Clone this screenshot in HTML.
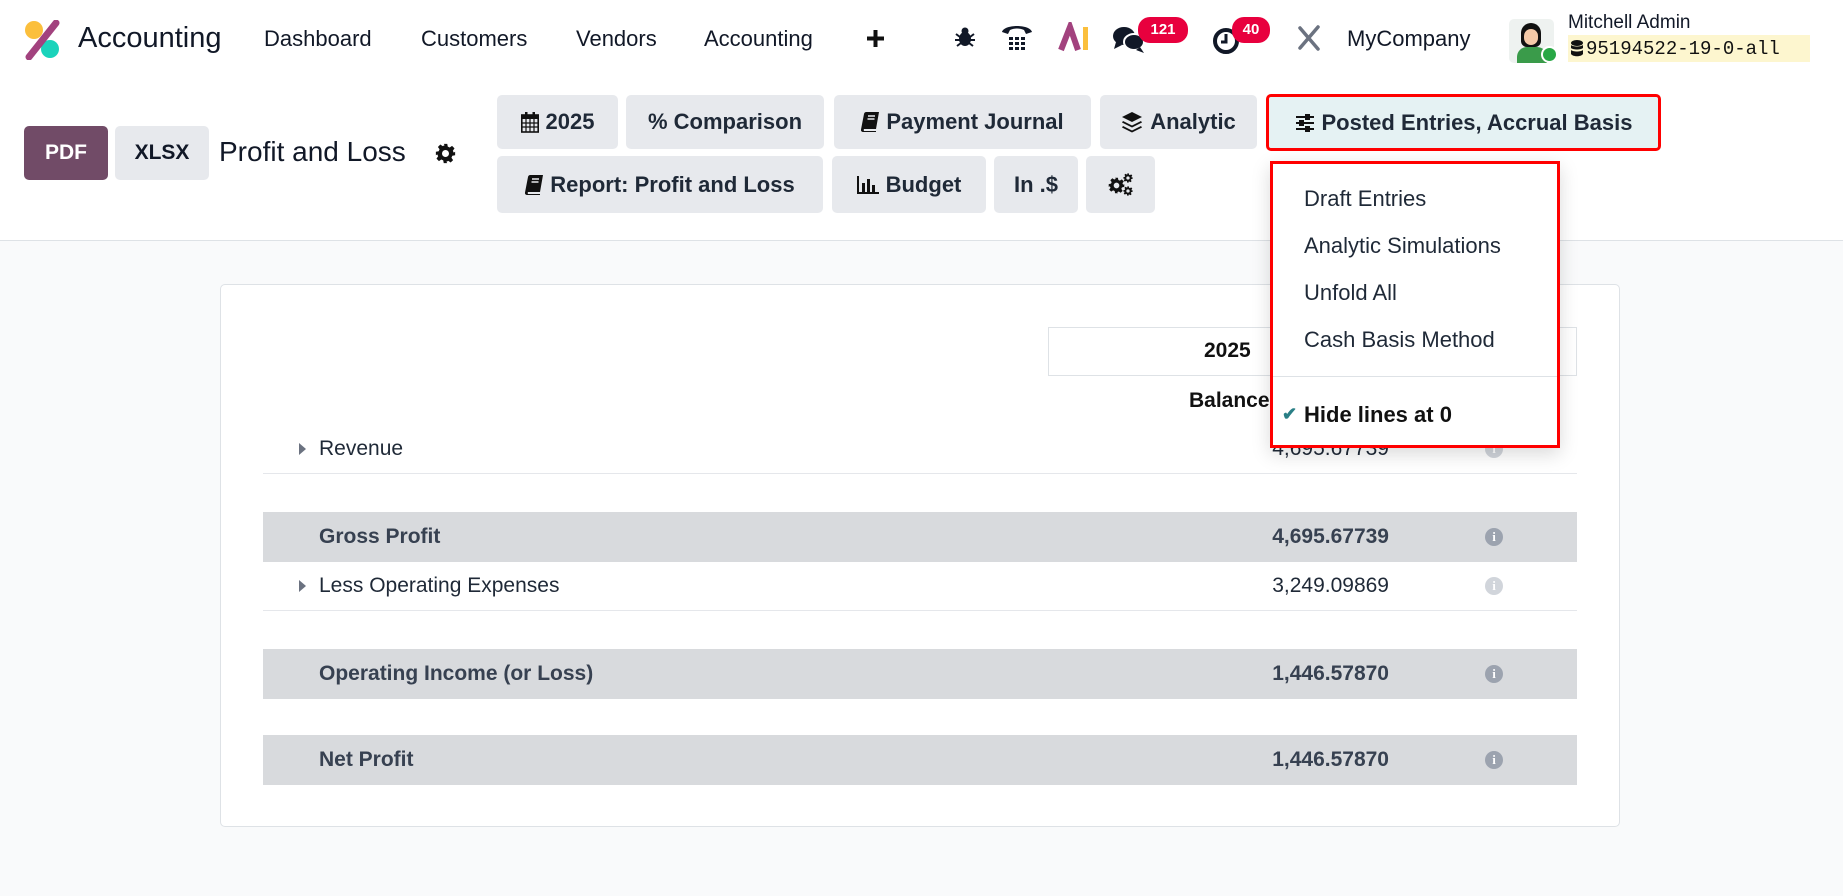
<!DOCTYPE html>
<html><head><meta charset="utf-8"><style>
*{box-sizing:border-box;margin:0;padding:0}
body{width:1843px;height:896px;position:relative;overflow:hidden;background:#f9fafb;font-family:"Liberation Sans",sans-serif;color:#1f2937}
.a{position:absolute;white-space:nowrap}
.top{position:absolute;left:0;top:0;width:1843px;height:241px;background:#fff;border-bottom:1px solid #dee2e6}
.nav{font-size:22px;color:#111827;top:26px}
.btn{position:absolute;background:#e7e9ed;border-radius:5px;font-weight:bold;font-size:22px;color:#1f2937;display:flex;align-items:center;justify-content:center;gap:7px}
.badge{position:absolute;background:#e8003e;color:#fff;font-weight:bold;font-size:15px;border-radius:12px;height:26px;line-height:26px;text-align:center}
.card{position:absolute;left:220px;top:284px;width:1400px;height:543px;background:#fff;border:1px solid #dee2e6;border-radius:5px}
.row{position:absolute;left:263px;width:1314px;height:50px;font-size:21px}
.row .l{position:absolute;left:56px;top:13px}
.row .v{position:absolute;right:188px;top:13px}
.band{background:#d8dadd;font-weight:bold;color:#374151}
.info{position:absolute;left:1222px;top:16px;width:18px;height:18px;border-radius:50%;background:#9ca3af;color:#fff;font-size:13px;font-weight:bold;text-align:center;line-height:18px;font-family:"Liberation Serif",serif}
.tri{position:absolute;left:36px;top:19px;width:0;height:0;border-left:7px solid #6b7280;border-top:6px solid transparent;border-bottom:6px solid transparent}
.dd{position:absolute;left:1270px;top:161px;width:290px;height:287px;background:#fff;border:3px solid #f00;box-shadow:0 6px 18px rgba(0,0,0,.15)}
.dd div{position:absolute;left:31px;font-size:22px;color:#1f2937}
</style></head><body>
<div class="top"></div>
<svg width="0" height="0" style="position:absolute"><defs>
<symbol id="gear" viewBox="0 0 24 24"><path fill="#111" d="M10 1h4l.6 3.2 2.2 1 2.7-1.9 2.8 2.8-1.9 2.7 1 2.2L23 10v4l-3.2.6-1 2.2 1.9 2.7-2.8 2.8-2.7-1.9-2.2 1L14 23h-4l-.6-3.2-2.2-1-2.7 1.9-2.8-2.8 1.9-2.7-1-2.2L1 14v-4l3.2-.6 1-2.2-1.9-2.7 2.8-2.8 2.7 1.9 2.2-1zM12 8a4 4 0 100 8 4 4 0 000-8z" fill-rule="evenodd"/></symbol>
<symbol id="book" viewBox="0 0 18 20"><path fill="#111" d="M5 0h13l-3 17H3a2 2 0 000 2h12v1H2a2 2 0 01-2-2.5L3 2a2.5 2.5 0 012-2z"/><path d="M7 4h7M6.5 7h7" stroke="#e7e9ed" stroke-width="1.4"/></symbol>
</defs></svg>
<!-- logo -->
<svg class="a" style="left:24px;top:20px" width="38" height="40" viewBox="0 0 38 40">
<circle cx="10" cy="10" r="9" fill="#fbbf3c"/><circle cx="26" cy="29" r="9" fill="#1ad3bb"/>
<line x1="32" y1="3" x2="5" y2="37" stroke="#a2427e" stroke-width="7" stroke-linecap="round"/></svg>
<div class="a" style="left:78px;top:22px;font-size:29px;color:#111827">Accounting</div>
<div class="a nav" style="left:264px">Dashboard</div>
<div class="a nav" style="left:421px">Customers</div>
<div class="a nav" style="left:576px">Vendors</div>
<div class="a nav" style="left:704px">Accounting</div>
<svg class="a" style="left:866px;top:29px" width="19" height="19" viewBox="0 0 19 19"><path d="M9.5 1v17M1 9.5h17" stroke="#111" stroke-width="4"/></svg>
<!-- icons -->
<svg class="a" style="left:954px;top:26px" width="22" height="22" viewBox="0 0 22 22" fill="#111827"><ellipse cx="11" cy="13" rx="6" ry="7"/><circle cx="11" cy="5" r="3.5"/><path d="M2 8l4 3M20 8l-4 3M1 14h5M21 14h-5M3 20l4-3M19 20l-4-3" stroke="#111827" stroke-width="2"/></svg>
<svg class="a" style="left:1000px;top:22px" width="34" height="30" viewBox="0 0 34 30" fill="#111827"><path d="M2 10C4 2 30 2 32 10l-6 2-2-4c-4-2-10-2-14 0l-2 4z"/><g><rect x="9" y="15" width="4" height="3"/><rect x="15" y="15" width="4" height="3"/><rect x="21" y="15" width="4" height="3"/><rect x="9" y="20" width="4" height="3"/><rect x="15" y="20" width="4" height="3"/><rect x="21" y="20" width="4" height="3"/><rect x="9" y="25" width="4" height="3"/><rect x="15" y="25" width="4" height="3"/><rect x="21" y="25" width="4" height="3"/></g></svg>
<svg class="a" style="left:1058px;top:22px" width="32" height="30" viewBox="0 0 32 30"><path d="M3 28L12 5l8 23" fill="none" stroke="#a2427e" stroke-width="6"/><rect x="25" y="5" width="5" height="23" fill="#fbbf3c"/></svg>
<svg class="a" style="left:1112px;top:25px" width="36" height="30" viewBox="0 0 36 30" fill="#111827"><ellipse cx="12" cy="11" rx="11" ry="9"/><path d="M4 17l-2 7 8-4z"/><ellipse cx="22" cy="17" rx="10" ry="8" fill="#111827" stroke="#fff" stroke-width="2"/><path d="M28 22l4 6-8-3z"/></svg>
<div class="badge" style="left:1138px;top:17px;width:50px">121</div>
<svg class="a" style="left:1212px;top:26px" width="30" height="30" viewBox="0 0 30 30"><circle cx="14" cy="15" r="11" fill="none" stroke="#111827" stroke-width="4"/><path d="M14 8v8h-5" fill="none" stroke="#111827" stroke-width="3"/></svg>
<div class="badge" style="left:1232px;top:17px;width:38px">40</div>
<svg class="a" style="left:1296px;top:24px" width="26" height="28" viewBox="0 0 26 28" stroke="#6b7280" stroke-width="3.5" stroke-linecap="round"><path d="M4 4l18 21M22 3L4 24"/></svg>
<div class="a nav" style="left:1347px">MyCompany</div>
<!-- avatar -->
<div class="a" style="left:1509px;top:19px;width:45px;height:44px;border-radius:5px;background:#eef2f0;overflow:hidden">
<div style="position:absolute;left:12px;top:4px;width:20px;height:24px;border-radius:10px 10px 6px 6px;background:#111"></div>
<div style="position:absolute;left:15px;top:10px;width:14px;height:16px;border-radius:7px;background:#f4c9a8"></div>
<div style="position:absolute;left:8px;top:28px;width:30px;height:20px;border-radius:10px 10px 0 0;background:#3a9b4a"></div></div>
<div class="a" style="left:1541px;top:46px;width:17px;height:17px;border-radius:50%;background:#28a745;border:2px solid #fff"></div>
<div class="a" style="left:1568px;top:12px;font-size:19px;color:#111827">Mitchell Admin</div>
<div class="a" style="left:1568px;top:35px;width:242px;height:27px;background:#fdf6cf"></div>
<svg class="a" style="left:1571px;top:40px" width="12" height="17" viewBox="0 0 12 17" fill="#111"><ellipse cx="6" cy="3" rx="6" ry="3"/><path d="M0 5c2 2 10 2 12 0v3c-2 2-10 2-12 0zM0 10c2 2 10 2 12 0v4c-2 3-10 3-12 0z"/></svg>
<div class="a" style="left:1586px;top:38px;font-size:19px;font-family:'Liberation Mono',monospace;color:#111">95194522-19-0-all</div>

<!-- left buttons -->
<div class="a" style="left:24px;top:126px;width:84px;height:54px;background:#714b67;border-radius:5px;color:#fff;font-size:21px;font-weight:bold;text-align:center;line-height:54px">PDF</div>
<div class="a" style="left:115px;top:126px;width:94px;height:54px;background:#e7e9ed;border-radius:5px;color:#111827;font-size:21px;font-weight:bold;text-align:center;line-height:54px">XLSX</div>
<div class="a" style="left:219px;top:136px;font-size:28px;color:#111827">Profit and Loss</div>
<svg class="a" style="left:435px;top:143px" width="21" height="21"><use href="#gear"/></svg>

<div class="btn" style="left:497px;top:95px;width:121px;height:54px"><svg width="18" height="21" viewBox="0 0 18 21"><rect x="0.8" y="3" width="16.4" height="17" fill="none" stroke="#111" stroke-width="1.6"/><rect x="0.8" y="3" width="16.4" height="4" fill="#111"/><path d="M1 11h16M1 15h16M5 7v13M9 7v13M13 7v13" stroke="#111" stroke-width="1.2"/><rect x="4" y="0" width="2.5" height="5" fill="#111"/><rect x="11.5" y="0" width="2.5" height="5" fill="#111"/></svg>2025</div>
<div class="btn" style="left:626px;top:95px;width:198px;height:54px">% Comparison</div>
<div class="btn" style="left:834px;top:95px;width:257px;height:54px"><svg width="18" height="20"><use href="#book"/></svg>Payment Journal</div>
<div class="btn" style="left:1100px;top:95px;width:157px;height:54px"><svg width="22" height="22" viewBox="0 0 22 22" fill="#111"><path d="M11 1l10 5-10 5L1 6z"/><path d="M2 10l9 4.5 9-4.5 1 1.5-10 5-10-5z"/><path d="M2 15l9 4.5 9-4.5 1 1.5-10 5-10-5z"/></svg>Analytic</div>
<div class="btn" style="left:1266px;top:94px;width:395px;height:57px;background:#e5f2f3;border:3px solid #f00">
<svg width="20" height="18" viewBox="0 0 20 18" stroke="#111" stroke-width="2"><path d="M1 3h18M1 9h18M1 15h18"/><rect x="11" y="1" width="3" height="4" fill="#111"/><rect x="5" y="7" width="3" height="4" fill="#111"/><rect x="11" y="13" width="3" height="4" fill="#111"/></svg>Posted Entries, Accrual Basis</div>
<div class="btn" style="left:497px;top:156px;width:326px;height:57px"><svg width="18" height="20"><use href="#book"/></svg>Report: Profit and Loss</div>
<div class="btn" style="left:832px;top:156px;width:154px;height:57px"><svg width="22" height="18" viewBox="0 0 22 18" fill="#111"><rect x="0" y="0" width="2" height="18"/><rect x="0" y="16" width="22" height="2"/><rect x="5" y="7" width="3" height="9"/><rect x="10" y="3" width="3" height="13"/><rect x="15" y="9" width="3" height="7"/></svg>Budget</div>
<div class="btn" style="left:994px;top:156px;width:84px;height:57px">In .$</div>
<div class="btn" style="left:1086px;top:156px;width:69px;height:57px"><svg width="26" height="24" viewBox="0 0 26 24"><use href="#gear" x="0" y="4" width="17" height="17"/><use href="#gear" x="15" y="0" width="10" height="10"/><use href="#gear" x="15" y="13" width="10" height="10"/></svg></div>

<!-- card -->
<div class="card"></div>
<div class="a" style="left:1048px;top:327px;width:529px;height:49px;border:1px solid #dee2e6;background:#fff"></div>
<div class="a" style="left:1204px;top:339px;font-size:21px;font-weight:bold;color:#111">2025</div>
<div class="a" style="left:1189px;top:389px;font-size:21px;font-weight:bold;color:#111">Balance</div>

<div class="row" style="top:424px;border-bottom:1px solid #e5e7eb"><div class="tri"></div><div class="l">Revenue</div><div class="v">4,695.67739</div><div class="info" style="background:#d1d5db">i</div></div>
<div class="row band" style="top:512px"><div class="l">Gross Profit</div><div class="v">4,695.67739</div><div class="info">i</div></div>
<div class="row" style="top:561px;border-bottom:1px solid #e5e7eb"><div class="tri"></div><div class="l">Less Operating Expenses</div><div class="v">3,249.09869</div><div class="info" style="background:#d1d5db">i</div></div>
<div class="row band" style="top:649px"><div class="l">Operating Income (or Loss)</div><div class="v">1,446.57870</div><div class="info">i</div></div>
<div class="row band" style="top:735px"><div class="l">Net Profit</div><div class="v">1,446.57870</div><div class="info">i</div></div>

<!-- dropdown -->
<div class="dd">
<div style="top:22px">Draft Entries</div>
<div style="top:69px">Analytic Simulations</div>
<div style="top:116px">Unfold All</div>
<div style="top:163px">Cash Basis Method</div>
<span style="position:absolute;left:0;right:0;top:212px;border-top:1px solid #dee2e6"></span>
<span style="position:absolute;left:9px;top:240px;color:#2a7f86;font-size:18px;font-weight:bold">&#10004;</span>
<div style="top:238px;font-weight:bold;color:#111">Hide lines at 0</div>
</div>
</body></html>
